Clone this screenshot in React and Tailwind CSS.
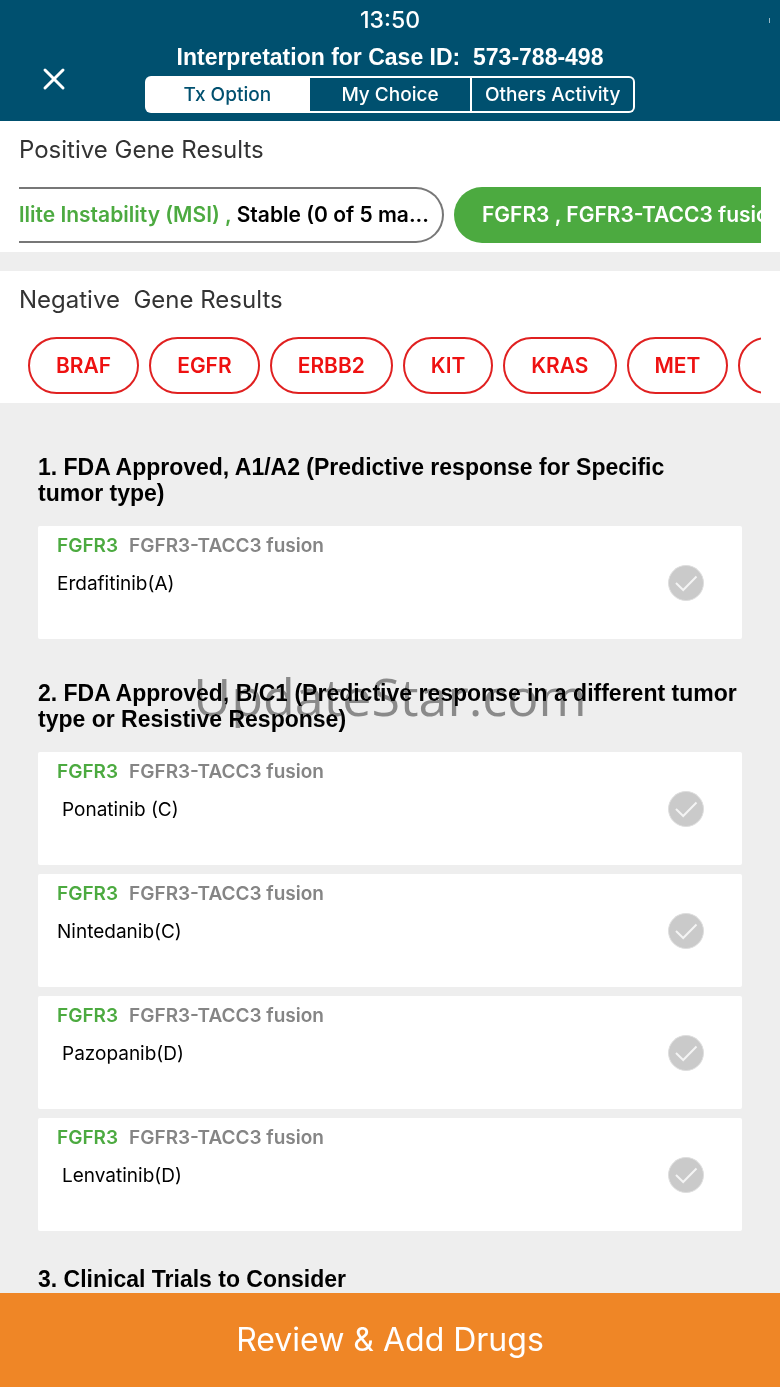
import { useState } from "react";
import { X } from "lucide-react";

const tabs = ["Tx Option", "My Choice", "Others Activity"];

const negativeGenes = ["BRAF", "EGFR", "ERBB2", "KIT", "KRAS", "MET"];

const approvedDrugs = [{ name: "Erdafitinib(A)" }];

const otherDrugs = [
  { name: "Ponatinib (C)", indent: true },
  { name: "Nintedanib(C)" },
  { name: "Pazopanib(D)", indent: true },
  { name: "Lenvatinib(D)", indent: true },
];

function Header() {
  const [active, setActive] = useState(tabs[0]);

  return (
    <header className="grid shrink-0 grid-cols-[1fr_490px_1fr] bg-[#00506f] pt-2 pb-2 text-white">
      <div className="col-start-2 text-center text-[23px] leading-6 font-medium">13:50</div>
      {/* edge of the battery indicator */}
      <span className="col-start-3 row-start-1 mr-[10px] h-[5px] w-px self-center justify-self-end bg-white/60" />
      <button aria-label="Close" className="col-start-1 row-start-2 row-end-4 mt-3 ml-9 self-center justify-self-start">
        <X size={36} strokeWidth={2} />
      </button>
      <h1 className="col-start-2 row-start-2 pt-[11px] pb-[5px] text-center font-['Liberation_Sans',sans-serif] text-[23px] leading-7 font-bold whitespace-pre">
        {"Interpretation for Case ID:  573-788-498"}
      </h1>
      <div className="col-start-2 row-start-3 grid h-[37px] grid-cols-3 gap-[2px] overflow-hidden rounded-md bg-white p-[2px]">
        {tabs.map((tab) => (
          <button
            key={tab}
            onClick={() => setActive(tab)}
            className={
              tab === active
                ? "bg-white text-[19px] leading-6 font-medium text-[#00506f]"
                : "bg-[#00506f] text-[19px] leading-6 font-medium whitespace-nowrap last:rounded-r-sm"
            }
          >
            {tab}
          </button>
        ))}
      </div>
    </header>
  );
}

function DrugCard({ name, indent }) {
  return (
    <label className="flex h-[113px] items-center justify-between rounded-xs bg-white pr-[38px] pl-[19px]">
      <span className="flex h-full flex-col gap-3 pt-2">
        <span className="flex gap-[11px] text-[19px] leading-6 font-semibold text-[#858585]">
          <span className="text-[#4caa40]">FGFR3</span>
          FGFR3-TACC3 fusion
        </span>
        <span className={indent ? "pl-[5px] text-[19px] leading-7" : "text-[19px] leading-7"}>{name}</span>
      </span>
      <span className="grid place-items-center">
        <input
          type="checkbox"
          className="col-start-1 row-start-1 size-9 appearance-none rounded-full border border-[#dedede] bg-[#cacaca] checked:bg-[#4caa40]"
        />
        <svg viewBox="0 0 36 36" className="pointer-events-none col-start-1 row-start-1 size-9" fill="none">
          <path d="M8 18 15.2 25 28.5 11.5" stroke="#f4f4f4" strokeWidth="2" />
        </svg>
      </span>
    </label>
  );
}

function DrugSection({ title, drugs }) {
  return (
    <section>
      <h2 className="flex h-[92px] items-center font-['Liberation_Sans',sans-serif] text-[23px] leading-[26px] font-bold whitespace-pre-line">
        {title}
      </h2>
      <div className="flex flex-col gap-[9px]">
        {drugs.map((drug) => (
          <DrugCard key={drug.name} {...drug} />
        ))}
      </div>
    </section>
  );
}

export default function App() {
  return (
    <div className="relative flex h-screen flex-col overflow-hidden bg-[#eee] font-['Inter',sans-serif] text-black">
      <Header />

      <section className="shrink-0 bg-white px-[19px] pt-[13px] pb-[9px]">
        <h2 className="text-2xl leading-8 text-[#333]">Positive Gene Results</h2>
        <div className="mt-[21px] flex gap-[10px] overflow-hidden text-[21px] font-semibold whitespace-nowrap">
          <button className="h-14 w-[425px] shrink-0 rounded-r-full border-2 border-l-0 border-[#777] text-left">
            <span className="text-[#4caa40]">llite Instability (MSI) ,</span> Stable (0 of 5 ma...
          </button>
          <button className="h-14 shrink-0 rounded-full bg-[#4caa40] px-7 text-white">FGFR3 , FGFR3-TACC3 fusion</button>
        </div>
      </section>

      <section className="mt-[19px] shrink-0 bg-white px-[19px] pt-[13px] pb-[9px]">
        <h2 className="text-2xl leading-8 whitespace-pre text-[#333]">{"Negative  Gene Results"}</h2>
        <div className="mt-[21px] flex gap-[10px] overflow-hidden pl-[9px] text-[21px] font-semibold whitespace-nowrap text-[#ee1111]">
          {negativeGenes.map((gene) => (
            <button key={gene} className="h-[57px] shrink-0 rounded-full border-2 border-[#e02020] px-[26px]">
              {gene}
            </button>
          ))}
          <button aria-label="More genes" className="h-[57px] w-28 shrink-0 rounded-full border-2 border-[#e02020]" />
        </div>
      </section>

      <main className="min-h-0 flex-1 overflow-hidden px-[38px] pt-[31px]">
        <DrugSection title={"1. FDA Approved, A1/A2 (Predictive response for Specific\ntumor type)"} drugs={approvedDrugs} />
        <div className="pt-[21px] pb-[2px]">
          <DrugSection
            title={"2. FDA Approved, B/C1 (Predictive response in a different tumor\ntype or Resistive Response)"}
            drugs={otherDrugs}
          />
        </div>
        <DrugSection title="3. Clinical Trials to Consider" drugs={[]} />
      </main>

      <button className="relative h-[94px] shrink-0 bg-[#ef8626] text-[32px] leading-10 text-white">Review &amp; Add Drugs</button>

      {/* watermark */}
      <div className="pointer-events-none absolute inset-0 flex items-center justify-center pt-1 font-['Open_Sans',sans-serif] text-[52px] text-[#8a8a8a] mix-blend-darken">
        UpdateStar.com
      </div>
    </div>
  );
}
